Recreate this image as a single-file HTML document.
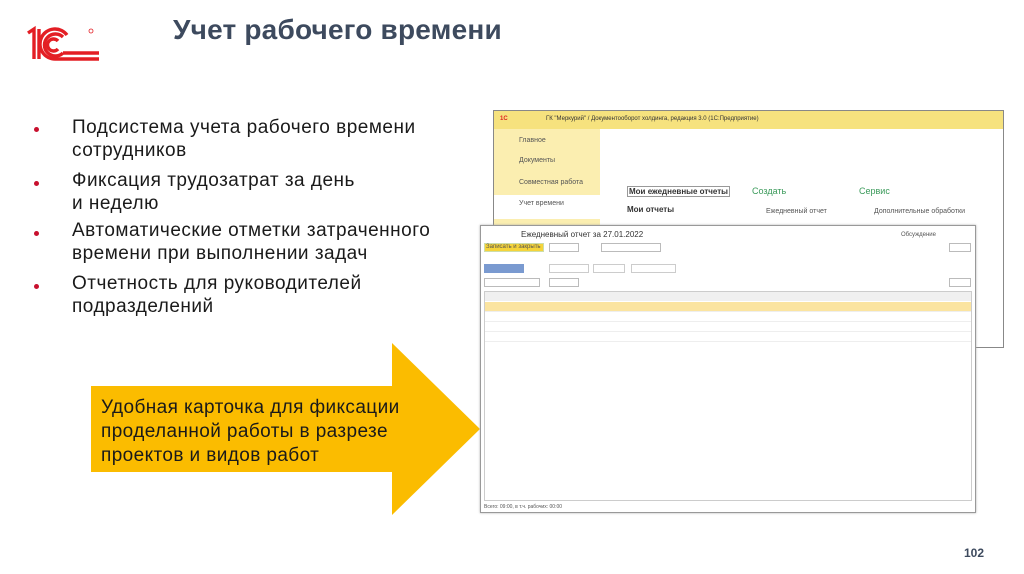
<!DOCTYPE html>
<html><head><meta charset="utf-8"><style>
*{margin:0;padding:0;box-sizing:border-box}
body{width:1024px;height:574px;background:#fff;position:relative;overflow:hidden;font-family:"Liberation Sans","DejaVu Sans",sans-serif}
.a{position:absolute}
.t{font-size:28px;font-weight:bold;color:#3d4a5e;left:173px;top:14px;letter-spacing:0.2px}
.li{position:absolute;left:72px;font-size:19px;color:#1a1a1a;line-height:23px;letter-spacing:0.5px}
.b{position:absolute;left:34px;width:5px;height:5px;border-radius:50%;background:#c8102e}
.s{font-size:6px;color:#555;white-space:nowrap}
</style></head><body>
<svg class="a" style="left:24px;top:25px" width="82" height="40" viewBox="0 0 80 40">
<g fill="none" stroke="#e31e24" stroke-width="3.4">
<path d="M3 8 L9 4 L9 34"/><path d="M14 4 L14 34"/>
<path d="M38 12 A11 11 0 1 0 38 28 M74 28 L38 28"/>
<path d="M33 16 A6 6 0 1 0 33 24 M74 34 L30 34 A15 15 0 1 1 42 10"/>
</g><circle cx="66" cy="6" r="2" fill="none" stroke="#e31e24" stroke-width="0.8"/></svg>
<div class="a t">Учет рабочего времени</div>
<div class="b" style="top:127px"></div>
<div class="li" style="top:116px">Подсистема учета рабочего времени<br>сотрудников</div>
<div class="b" style="top:181px"></div>
<div class="li" style="top:169px">Фиксация трудозатрат за день<br>и неделю</div>
<div class="b" style="top:231px"></div>
<div class="li" style="top:219px">Автоматические отметки затраченного<br>времени при выполнении задач</div>
<div class="b" style="top:284px"></div>
<div class="li" style="top:272px">Отчетность для руководителей<br>подразделений</div>

<svg class="a" style="left:0;top:0" width="1024" height="574"><polygon points="91,386 392,386 392,343 480,429 392,515 392,472 91,472" fill="#fbbc00"/></svg>
<div class="a" style="left:101px;top:396px;font-size:19px;line-height:24px;color:#1a1a1a;letter-spacing:0.4px">Удобная карточка для фиксации<br>проделанной работы в разрезе<br>проектов и видов работ</div>

<!-- back window -->
<div class="a" style="left:493px;top:110px;width:511px;height:238px;border:1px solid #888;background:#fff">
 <div class="a" style="left:0;top:0;width:509px;height:18px;background:#f6e27e"></div>
 <div class="a s" style="left:6px;top:5px;color:#d22;font-weight:bold">1С</div>
 <div class="a s" style="left:52px;top:5px;color:#333">ГК "Меркурий" / Документооборот холдинга, редакция 3.0 (1С:Предприятие)</div>
 <div class="a" style="left:0;top:18px;width:106px;height:220px;background:#fbeeb0"></div>
 <div class="a" style="left:0;top:84px;width:106px;height:24px;background:#fff"></div>
 <div class="a s" style="left:25px;top:26px;font-size:7px">Главное</div>
 <div class="a s" style="left:25px;top:46px;font-size:7px">Документы</div>
 <div class="a s" style="left:25px;top:68px;font-size:7px">Совместная работа</div>
 <div class="a s" style="left:25px;top:89px;font-size:7px">Учет времени</div>
 <div class="a s" style="left:133px;top:75px;font-size:8px;font-weight:bold;color:#333;border:1px solid #999;padding:0 1px">Мои ежедневные отчеты</div>
 <div class="a s" style="left:133px;top:94px;font-size:8px;font-weight:bold;color:#333">Мои отчеты</div>
 <div class="a s" style="left:258px;top:75px;font-size:9px;color:#3a9a5a">Создать</div>
 <div class="a s" style="left:365px;top:75px;font-size:9px;color:#3a9a5a">Сервис</div>
 <div class="a s" style="left:272px;top:97px;font-size:7px">Ежедневный отчет</div>
 <div class="a s" style="left:380px;top:97px;font-size:7px">Дополнительные обработки</div>
</div>
<!-- front window -->
<div class="a" style="left:480px;top:225px;width:496px;height:288px;border:1px solid #999;background:#fff;box-shadow:0 0 2px #aaa">
 <div class="a" style="left:40px;top:4px;font-size:8px;color:#333">Ежедневный отчет за 27.01.2022</div>
 <div class="a s" style="left:420px;top:6px">Обсуждение</div>
 <div class="a" style="left:3px;top:17px;width:60px;height:9px;background:#f5d43a;border:1px solid #cda"></div>
 <div class="a s" style="left:5px;top:18px">Записать и закрыть</div>
 <div class="a" style="left:68px;top:17px;width:30px;height:9px;border:1px solid #bbb"></div>
 <div class="a" style="left:120px;top:17px;width:60px;height:9px;border:1px solid #bbb"></div>
 <div class="a" style="left:468px;top:17px;width:22px;height:9px;border:1px solid #bbb"></div>
 <div class="a" style="left:3px;top:38px;width:40px;height:9px;background:#7a9ad0"></div>
 <div class="a" style="left:68px;top:38px;width:40px;height:9px;border:1px solid #ccc"></div>
 <div class="a" style="left:112px;top:38px;width:32px;height:9px;border:1px solid #ccc"></div>
 <div class="a" style="left:150px;top:38px;width:45px;height:9px;border:1px solid #ccc"></div>
 <div class="a" style="left:3px;top:52px;width:56px;height:9px;border:1px solid #bbb"></div>
 <div class="a" style="left:68px;top:52px;width:30px;height:9px;border:1px solid #bbb"></div>
 <div class="a" style="left:468px;top:52px;width:22px;height:9px;border:1px solid #bbb"></div>
 <div class="a" style="left:3px;top:65px;width:488px;height:210px;border:1px solid #ccc">
  <div class="a" style="left:0;top:0;width:486px;height:9px;background:#f0f0f0"></div>
  <div class="a" style="left:0;top:10px;width:486px;height:9px;background:#fbe4a0"></div>
  <div class="a" style="left:0;top:19px;width:486px;height:1px;background:#eee"></div>
  <div class="a" style="left:0;top:29px;width:486px;height:1px;background:#eee"></div>
  <div class="a" style="left:0;top:39px;width:486px;height:1px;background:#eee"></div>
  <div class="a" style="left:0;top:49px;width:486px;height:1px;background:#eee"></div>
 </div>
 <div class="a s" style="left:3px;top:278px;font-size:5px">Всего: 09:00, в т.ч. рабочих: 00:00</div>
</div>
<div class="a" style="left:964px;top:546px;font-size:12px;font-weight:bold;color:#3d4a5e">102</div>
</body></html>
